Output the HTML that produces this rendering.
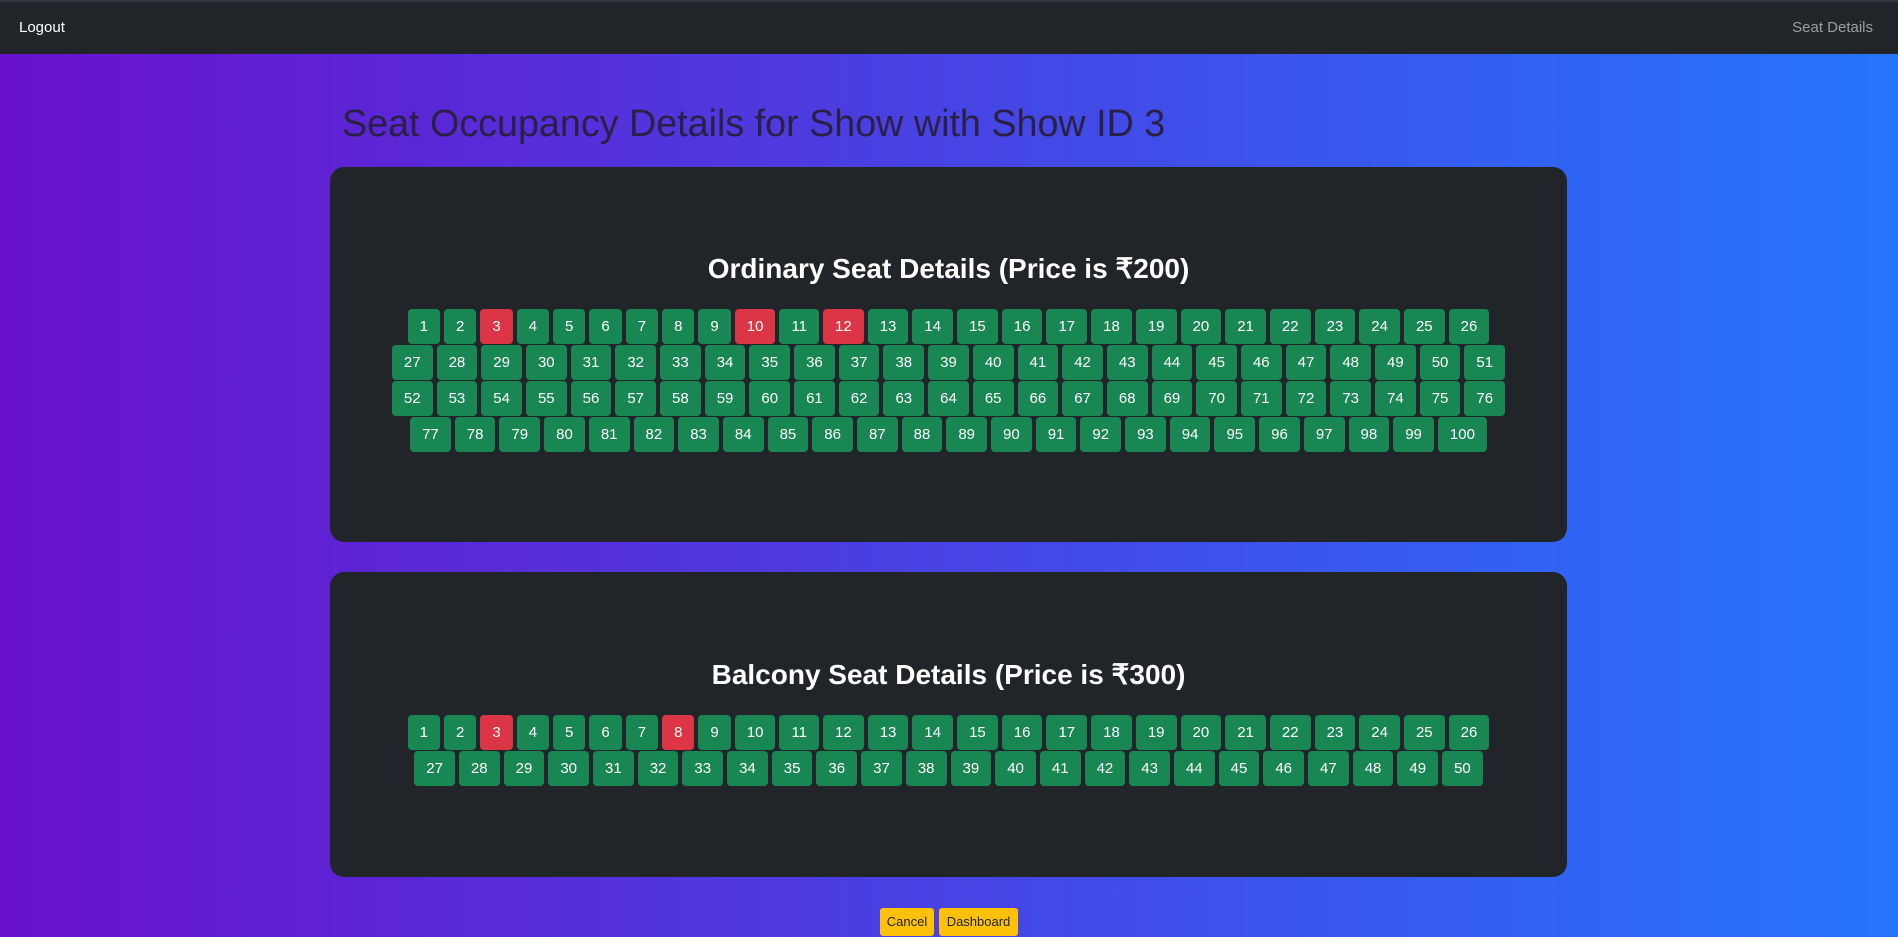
<!DOCTYPE html>
<html><head><meta charset="utf-8"><style>
*{box-sizing:border-box;margin:0;padding:0}
body{width:1898px;height:937px;overflow:hidden;font-family:"Liberation Sans",sans-serif;background:linear-gradient(90deg,#6a11cb,#2575fc);position:relative}
.nav{position:absolute;left:0;top:0;width:1898px;height:54px;background:#212529;border-top:2px solid #33373d}
.nav .l{position:absolute;left:19px;top:17px;color:#fff;font-size:15px}
.nav .r{position:absolute;right:25px;top:17px;color:rgba(255,255,255,.55);font-size:15px}
h1{position:absolute;left:342px;top:100px;font-size:37.7px;font-weight:normal;color:#2a1f45;line-height:46px;white-space:nowrap}
.card{position:absolute;left:330px;width:1237px;background:#212529;border-radius:14px;display:flex;flex-direction:column;align-items:center;justify-content:center;padding-bottom:7px}
h2{color:#fff;font-size:28px;font-weight:bold;line-height:36px;margin-bottom:22px}
.seats{width:1130px;display:flex;flex-wrap:wrap;justify-content:center;row-gap:1px}
.s{height:35px;padding:0 12px;margin:0 2px;background:#198754;color:#fff;font-size:15px;line-height:35px;border-radius:4px}
.s.r{background:#dc3545}
.btn{position:absolute;top:908px;height:28px;background:#ffc107;color:#212529;font-size:13px;line-height:28px;text-align:center;border-radius:3px}
</style></head><body>
<div class="nav"><span class="l">Logout</span><span class="r">Seat Details</span></div>
<h1>Seat Occupancy Details for Show with Show ID 3</h1>
<div class="card" style="top:167px;height:375px"><h2>Ordinary Seat Details (Price is ₹200)</h2><div class="seats" id="a"></div></div>
<div class="card" style="top:572px;height:305px"><h2>Balcony Seat Details (Price is ₹300)</h2><div class="seats" id="b"></div></div>
<div class="btn" style="left:880px;width:54px">Cancel</div>
<div class="btn" style="left:939px;width:79px">Dashboard</div>
<script>
function f(id,n,red){var h='';for(var i=1;i<=n;i++)h+='<div class="s'+(red.indexOf(i)>=0?' r':'')+'">'+i+'</div>';document.getElementById(id).innerHTML=h;}
f('a',100,[3,10,12]);f('b',50,[3,8]);
</script>
</body></html>
